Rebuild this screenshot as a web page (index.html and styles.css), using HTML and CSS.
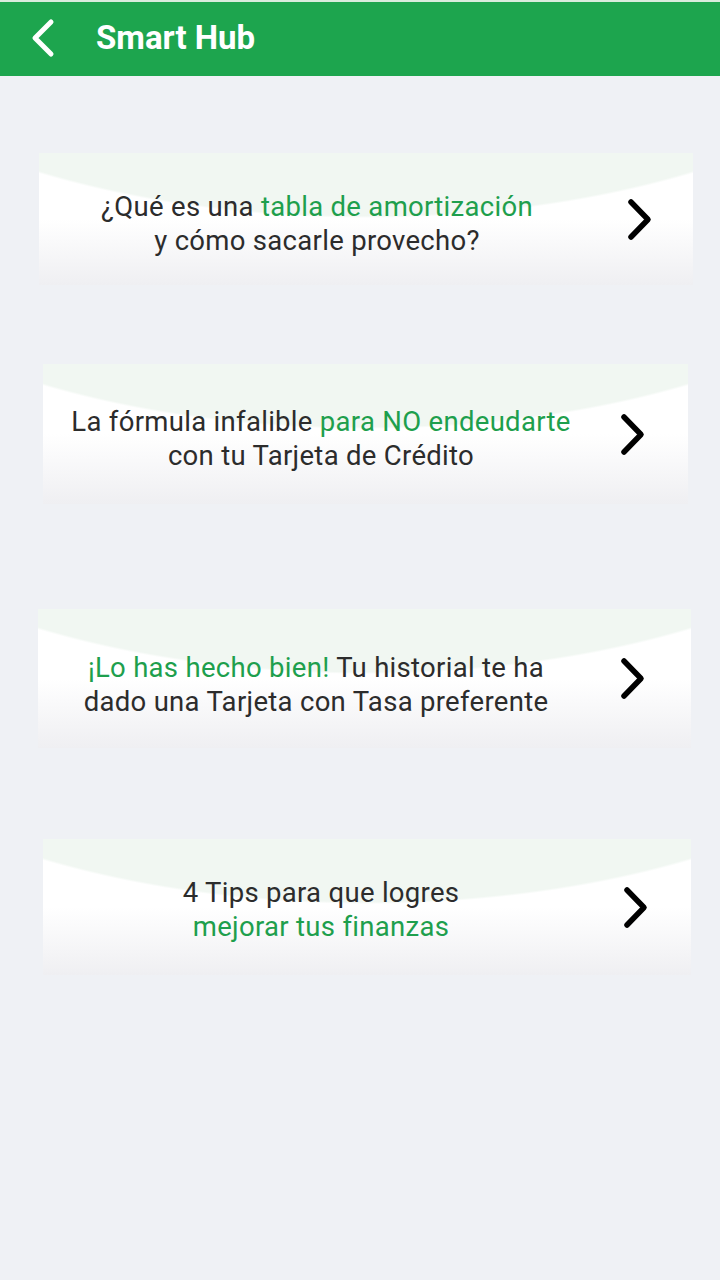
FILE: index.html
```html
<!DOCTYPE html>
<html lang="es">
<head>
<meta charset="utf-8">
<title>Smart Hub</title>
<link rel="stylesheet" href="styles.css">
</head>
<body>
<header class="topbar">
  <svg class="back" width="26" height="40" viewBox="0 0 26 40"><path d="M21 4 L5 20 L21 36" fill="none" stroke="#fff" stroke-width="5" stroke-linecap="round" stroke-linejoin="round"/></svg>
  <h1 class="title">Smart Hub</h1>
</header>
<main class="list">
  <a class="card card-1">
    <p class="card-text">¿Qué es una <span class="hl">tabla de amortización</span><br>y cómo sacarle provecho?</p>
    <svg class="chev" width="25" height="43" viewBox="0 0 25 43"><path d="M4 4 L21 21.5 L4 39" fill="none" stroke="#000" stroke-width="5.5" stroke-linecap="round" stroke-linejoin="round"/></svg>
  </a>
  <a class="card card-2">
    <p class="card-text">La fórmula infalible <span class="hl">para NO endeudarte</span><br>con tu Tarjeta de Crédito</p>
    <svg class="chev" width="25" height="43" viewBox="0 0 25 43"><path d="M4 4 L21 21.5 L4 39" fill="none" stroke="#000" stroke-width="5.5" stroke-linecap="round" stroke-linejoin="round"/></svg>
  </a>
  <a class="card card-3">
    <p class="card-text"><span class="hl">¡Lo has hecho bien!</span> Tu historial te ha<br>dado una Tarjeta con Tasa preferente</p>
    <svg class="chev" width="25" height="43" viewBox="0 0 25 43"><path d="M4 4 L21 21.5 L4 39" fill="none" stroke="#000" stroke-width="5.5" stroke-linecap="round" stroke-linejoin="round"/></svg>
  </a>
  <a class="card card-4">
    <p class="card-text">4 Tips para que logres<br><span class="hl">mejorar tus finanzas</span></p>
    <svg class="chev" width="25" height="43" viewBox="0 0 25 43"><path d="M4 4 L21 21.5 L4 39" fill="none" stroke="#000" stroke-width="5.5" stroke-linecap="round" stroke-linejoin="round"/></svg>
  </a>
</main>
</body>
</html>
```
FILE: styles.css
```css
html, body {
  margin: 0;
  padding: 0;
}
body {
  width: 720px;
  min-height: 1280px;
  background: #eff1f5;
  font-family: Roboto, "Noto Sans", "Liberation Sans", sans-serif;
}
.topbar {
  box-sizing: border-box;
  height: 76px;
  border-top: 2px solid #d9ecdd;
  background: #1da54e;
  display: flex;
  align-items: center;
  padding-left: 30px;
}
.back {
  display: block;
  margin-top: -2px;
}
.title {
  margin: -4px 0 0 40px;
  color: #fff;
  font-size: 33px;
  font-weight: 700;
  line-height: 1;
}
.list {
  display: flex;
  flex-direction: column;
  align-items: flex-start;
}
.card {
  box-sizing: border-box;
  display: grid;
  grid-template-columns: 556px 25px;
  column-gap: 26px;
  align-items: center;
  text-decoration: none;
  background:
    linear-gradient(to bottom, rgba(239, 239, 241, 0) 50%, #efeff2 100%),
    radial-gradient(600px 276px at 50% -211px, #f1f7f2 99.2%, #ffffff 100%);
}
.card-text {
  margin: 0;
  padding-top: 10px;
  text-align: center;
  font-size: 27.5px;
  letter-spacing: 0.3px;
  line-height: 34px;
  color: #2c2c2c;
}
.hl {
  color: #1e9f4d;
}
.chev {
  display: block;
}
.card-1 {
  margin: 77px 0 0 39px;
  width: 654px;
  height: 132px;
  column-gap: 32px;
}
.card-2 {
  margin: 79px 0 0 43px;
  width: 645px;
  height: 140px;
  column-gap: 21px;
}
.card-3 {
  margin: 105px 0 0 38px;
  width: 653px;
  height: 139px;
}
.card-3 .card-text {
  padding-top: 12px;
}
.card-4 {
  margin: 91px 0 0 43px;
  width: 648px;
  height: 136px;
  column-gap: 24px;
}
.card-4 .card-text {
  padding-top: 6px;
}
```
